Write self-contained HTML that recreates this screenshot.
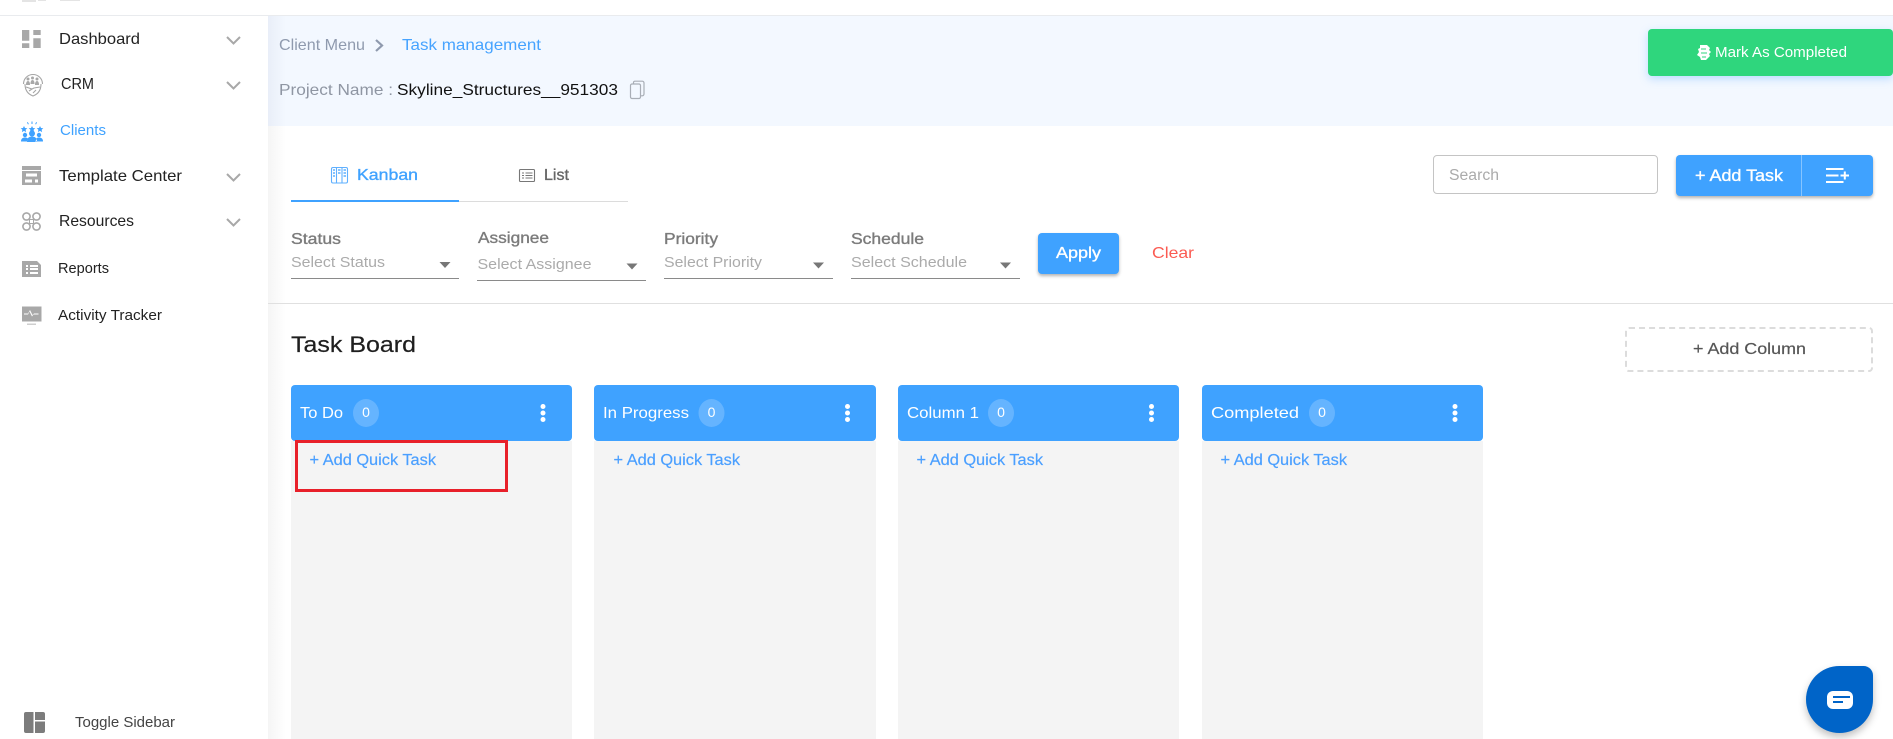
<!DOCTYPE html>
<html lang="en"><head><meta charset="utf-8"><title>Task Board</title>
<style>
html,body{margin:0;padding:0;width:1893px;height:739px;overflow:hidden;background:#fff}
.b{position:absolute;box-sizing:border-box}
svg{position:absolute;left:0;top:0;filter:blur(.3px)}
text{font-family:"Liberation Sans",sans-serif}
.m{stroke-width:.35px;paint-order:stroke}
.s{stroke-width:.2px;paint-order:stroke}
</style></head><body>
<div class="b" style="left:22px;top:0;width:14px;height:2px;background:#e4e4e4"></div>
<div class="b" style="left:38px;top:0;width:8px;height:1px;background:#e4e4e4"></div>
<div class="b" style="left:60px;top:0;width:20px;height:1px;background:#e4e4e4"></div>
<div class="b" style="left:0;top:15px;width:1893px;height:1px;background:#e9ebee"></div>
<div class="b" style="left:268px;top:16px;width:1625px;height:723px;background:linear-gradient(90deg,#f5f5f5,#fff 18px)"></div>
<div class="b" style="left:268px;top:16px;width:1625px;height:110px;background:linear-gradient(90deg,#e9eef8,#f3f8ff 18px)"></div>
<div class="b" style="left:268px;top:303px;width:1625px;height:1px;background:#e0e0e0"></div>
<div class="b" style="left:1648px;top:29px;width:245px;height:47px;background:#2fd67d;border-radius:4px;box-shadow:0 3px 9px rgba(90,170,255,.35)"></div>
<div class="b" style="left:291px;top:200px;width:168px;height:2px;background:#3fa2ff"></div>
<div class="b" style="left:459px;top:201px;width:169px;height:1px;background:#dcdcdc"></div>
<div class="b" style="left:291px;top:278px;width:168px;height:1px;background:#8a8a8a"></div>
<div class="b" style="left:477px;top:280px;width:169px;height:1px;background:#8a8a8a"></div>
<div class="b" style="left:664px;top:278px;width:169px;height:1px;background:#8a8a8a"></div>
<div class="b" style="left:851px;top:278px;width:169px;height:1px;background:#8a8a8a"></div>
<div class="b" style="left:1038px;top:233px;width:81px;height:41px;background:#3fa2ff;border-radius:4px;box-shadow:0 2px 3px rgba(0,0,0,.3)"></div>
<div class="b" style="left:1433px;top:155px;width:225px;height:39px;background:#fff;border:1px solid #c4c4c4;border-radius:4px"></div>
<div class="b" style="left:1676px;top:155px;width:197px;height:41px;background:#3fa2ff;border-radius:4px;box-shadow:0 2px 3px rgba(0,0,0,.3)"></div>
<div class="b" style="left:1801px;top:155px;width:1px;height:41px;background:#86c4ff"></div>
<div class="b" style="left:1625px;top:327px;width:248px;height:45px;border:2px dashed #dcdcdc;border-radius:4px"></div>

<div class="b" style="left:291px;top:441px;width:281px;height:298px;background:#f4f4f4"></div>
<div class="b" style="left:594px;top:441px;width:282px;height:298px;background:#f4f4f4"></div>
<div class="b" style="left:898px;top:441px;width:281px;height:298px;background:#f4f4f4"></div>
<div class="b" style="left:1202px;top:441px;width:281px;height:298px;background:#f4f4f4"></div>
<div class="b" style="left:291px;top:385px;width:281px;height:56px;background:#3fa2ff;border-radius:4px"></div>
<div class="b" style="left:594px;top:385px;width:282px;height:56px;background:#3fa2ff;border-radius:4px"></div>
<div class="b" style="left:898px;top:385px;width:281px;height:56px;background:#3fa2ff;border-radius:4px"></div>
<div class="b" style="left:1202px;top:385px;width:281px;height:56px;background:#3fa2ff;border-radius:4px"></div>
<div class="b" style="left:295px;top:440px;width:213px;height:52px;border:3px solid #e8202a"></div>
<div class="b" style="left:1806px;top:666px;width:67px;height:67px;background:#0064c8;border-radius:50% 14% 50% 50%;box-shadow:0 4px 8px rgba(0,0,0,.25)"></div>
<div class="b" style="left:1827px;top:691px;width:26px;height:18px;background:#fff;border-radius:6px"></div>
<div class="b" style="left:1833px;top:696px;width:17px;height:2px;background:#0064c8"></div>
<div class="b" style="left:1833px;top:701px;width:10px;height:2px;background:#0064c8"></div>

<svg width="1893" height="739" viewBox="0 0 1893 739" xmlns="http://www.w3.org/2000/svg">
<!-- sidebar text -->
<g font-size="16" fill="#222">
<text x="59" y="44" textLength="81" lengthAdjust="spacingAndGlyphs">Dashboard</text>
<text x="61" y="89" textLength="33" lengthAdjust="spacingAndGlyphs">CRM</text>
<text x="60" y="135" font-size="15" fill="#3fa2ff" textLength="46" lengthAdjust="spacingAndGlyphs">Clients</text>
<text x="59" y="181" textLength="123" lengthAdjust="spacingAndGlyphs">Template Center</text>
<text x="59" y="226" textLength="75" lengthAdjust="spacingAndGlyphs">Resources</text>
<text x="58" y="273" font-size="14.5" textLength="51" lengthAdjust="spacingAndGlyphs">Reports</text>
<text x="58" y="320" font-size="14.5" textLength="104" lengthAdjust="spacingAndGlyphs">Activity Tracker</text>
<text x="75" y="727" font-size="14.5" fill="#444" textLength="100" lengthAdjust="spacingAndGlyphs">Toggle Sidebar</text>
</g>
<!-- chevrons -->
<g fill="none" stroke="#a8a8a8" stroke-width="2">
<path d="M227 37l6.500 6.500 6.500-6.500M227 82l6.500 6.500 6.500-6.500M227 174l6.500 6.500 6.500-6.500M227 219l6.500 6.500 6.500-6.500"/>
</g>
<!-- sidebar icons -->
<g fill="#a8a8a8">
<path d="M22 30h7.300v10.700H22zM22 43.300h7.300V48H22zM33.300 30h7.400v5h-7.400zM33.300 38.300h7.400V48h-7.400z"/>
<g fill="none" stroke="#a6a6a6" stroke-width="1.100"><path d="M23.500 84a9.500 9.500 0 0 1 19 0"/><path d="M25 84c0 7 4 10.500 8 12 4-1.500 8-5 8-12"/><path d="M26 87l6 2 2-1 6-1M29 91l3-2M33 93l3-3"/></g>
<circle cx="28" cy="79" r="1.500"/><circle cx="32.500" cy="78" r="1.500"/><circle cx="37" cy="79" r="1.500"/>
<path d="M26 85q0-4 2-4t2 4zM30.500 84q0-4 2-4t2 4zM35 85q0-4 2-4t2 4z"/>
<path d="M22 166h19v4H22z"/><path fill-rule="evenodd" d="M22 171h19v14H22zM26 173.500v3h11v-3zM25 179.500v3h7v-3zM35 179.500v3h3v-3z"/>
<g fill="none" stroke="#a8a8a8" stroke-width="1.600"><circle cx="26.500" cy="216.500" r="3.600"/><circle cx="36.500" cy="216.500" r="3.600"/><circle cx="26.500" cy="226.500" r="3.600"/><circle cx="36.500" cy="226.500" r="3.600"/><rect x="29.500" y="219.500" width="4" height="4" stroke-width="1"/></g>
<path fill-rule="evenodd" d="M22 261h15l4 4v12H22zM26 265v2h2v-2zM30 265v2h8v-2zM26 268v2h2v-2zM30 268v2h8v-2zM26 272v2h2v-2zM30 272v2h8v-2z"/>
<path fill-rule="evenodd" d="M22 306.500h19.500v15H22zM24 314.500h4l1.500-3 2.500 5 1.500-2h5v-1h-4.500l-1.500 1.500-2.500-5-2 3.500h-4z"/><path d="M27 323.500h9v1.500h-9z" fill="#cfcfcf"/>
<path fill="#7c7c7c" d="M26 712h7.500v21H26a2 2 0 0 1-2-2v-17a2 2 0 0 1 2-2zM35 712h8a2 2 0 0 1 2 2v6h-10zM35 721.500h10v9.500a2 2 0 0 1-2 2h-8z"/>
</g>
<g fill="#3fa2ff">
<path d="M24 126l1 2 2.300.3-1.700 1.500.5 2.300-2.100-1.200-2.100 1.200.5-2.300-1.700-1.500 2.300-.3zM32 126l1 2 2.300.3-1.700 1.500.5 2.300-2.100-1.200-2.100 1.200.5-2.300-1.700-1.500 2.300-.3zM40 126l1 2 2.300.3-1.700 1.500.5 2.300-2.100-1.200-2.100 1.200.5-2.300-1.700-1.500 2.300-.3z"/>
<circle cx="25" cy="135" r="2.200"/><circle cx="32" cy="133.500" r="3"/><circle cx="39" cy="135" r="2.200"/>
<path d="M21 141.500q0-4 4-4 2 0 3 1-1 1-1 3zM43 141.500q0-4-4-4-2 0-3 1 1 1-1 3zM27 142q0-5.500 5-5.500t5 5.500z"/>
<path d="M31.500 121.500h1v2.500h-1zM27 122.500l.8-.5 1 2-.8.500zM37 122.500l-.8-.5-1 2 .8.500z"/>
</g>
<!-- breadcrumb -->
<g font-size="16">
<text x="279" y="50" fill="#8f9aae" textLength="86" lengthAdjust="spacingAndGlyphs">Client Menu</text>
<text x="402" y="50" fill="#46a3ff" textLength="139" lengthAdjust="spacingAndGlyphs">Task management</text>
<text x="279" y="95" fill="#8f96a3" textLength="114" lengthAdjust="spacingAndGlyphs">Project Name :</text>
<text x="397" y="95" fill="#111" textLength="221" lengthAdjust="spacingAndGlyphs">Skyline_Structures__951303</text>
</g>
<path d="M376 40l6 5.500-6 5.500" fill="none" stroke="#8f9aae" stroke-width="2.200"/>
<g fill="none" stroke="#a9aeb6" stroke-width="1.200"><rect x="630.500" y="84" width="10" height="14.500" rx="1.500"/><path d="M633.500 84v-1.500a1.300 1.300 0 0 1 1.300-1.300h7.400a1.800 1.800 0 0 1 1.800 1.800v11a1.800 1.800 0 0 1-1.800 1.800h-1.700"/></g>
<!-- tabs -->
<g fill="none" stroke="#5fb0ff" stroke-width="1.100"><rect x="331.500" y="167.500" width="16" height="15.500" rx="1.500"/><path d="M336.500 167.500V183M342 167.500V183"/><path d="M333 170h2M333 173h2M333 176h2M338 170h2.500M338 173h2.500M343.500 170h2.500M343.500 173h2.500M343.500 176h2.500" stroke-width="1.400"/></g>
<text x="357" y="180" font-size="16" fill="#3fa2ff" stroke="#3fa2ff" class="m" textLength="61" lengthAdjust="spacingAndGlyphs">Kanban</text>
<g fill="none" stroke="#777" stroke-width="1.100"><rect x="519.500" y="169.500" width="15" height="12" rx="1"/><path d="M522 173h2M525.500 173h7M522 175.500h2M525.500 175.500h7M522 178h2M525.500 178h7"/></g>
<text x="544" y="180" font-size="16" fill="#666" stroke="#666" class="m" textLength="25" lengthAdjust="spacingAndGlyphs">List</text>
<!-- filters -->
<g font-size="15.500" fill="#7b7b7b" stroke="#7b7b7b">
<text x="291" y="244" textLength="50" lengthAdjust="spacingAndGlyphs" class="m">Status</text>
<text x="478" y="243" textLength="71" lengthAdjust="spacingAndGlyphs" class="m">Assignee</text>
<text x="664" y="244" textLength="54" lengthAdjust="spacingAndGlyphs" class="m">Priority</text>
<text x="851" y="244" textLength="73" lengthAdjust="spacingAndGlyphs" class="m">Schedule</text>
</g>
<g font-size="15" fill="#ababab">
<text x="291" y="267" textLength="94" lengthAdjust="spacingAndGlyphs">Select Status</text>
<text x="477.500" y="269" textLength="114" lengthAdjust="spacingAndGlyphs">Select Assignee</text>
<text x="664" y="267" textLength="98" lengthAdjust="spacingAndGlyphs">Select Priority</text>
<text x="851" y="267" textLength="116" lengthAdjust="spacingAndGlyphs">Select Schedule</text>
</g>
<g fill="#777"><path d="M439.500 262h11l-5.500 6zM626.500 263.500h11l-5.500 6zM813 262.500h11l-5.500 6zM1000 262.500h11l-5.500 6z"/></g>
<text x="1056" y="258" font-size="16" fill="#fff" stroke="#fff" class="m" textLength="45" lengthAdjust="spacingAndGlyphs">Apply</text>
<text x="1152" y="258" font-size="16" fill="#fb5b52" textLength="42" lengthAdjust="spacingAndGlyphs">Clear</text>
<!-- top right -->
<g fill="#fff"><path d="M1700 45h7l3 3-1 2 2 2-2 2 1 2-4 4h-5l-1-3-3-2 2-3-1-3 2-1z"/></g>
<path d="M1701 49h5M1701 53h6M1702 57h4" stroke="#2fd67d" stroke-width="1" fill="none"/>
<text x="1715" y="57" font-size="15" fill="#fff" textLength="132" lengthAdjust="spacingAndGlyphs">Mark As Completed</text>
<text x="1449" y="180" font-size="15.500" fill="#ababab" textLength="50" lengthAdjust="spacingAndGlyphs">Search</text>
<text x="1695" y="181" font-size="16.500" fill="#fff" stroke="#fff" class="m" textLength="88" lengthAdjust="spacingAndGlyphs">+ Add Task</text>
<path d="M1826 169h17.500M1826 175.500h12.500M1826 182h17.500M1840.500 175.500h8.500M1844.800 171.500v8" stroke="#fff" stroke-width="2" fill="none"/>
<!-- board -->
<text x="291" y="352" font-size="22.500" fill="#1e1e1e" stroke="#1e1e1e" class="s" textLength="125" lengthAdjust="spacingAndGlyphs">Task Board</text>
<text x="1693" y="354" font-size="16" fill="#555" stroke="#555" class="s" textLength="113" lengthAdjust="spacingAndGlyphs">+ Add Column</text>
<g fill="#fff" font-size="16">
<text x="300" y="418" textLength="43" lengthAdjust="spacingAndGlyphs">To Do</text>
<text x="603" y="418" textLength="86" lengthAdjust="spacingAndGlyphs">In Progress</text>
<text x="907" y="418" textLength="72" lengthAdjust="spacingAndGlyphs">Column 1</text>
<text x="1211" y="418" textLength="88" lengthAdjust="spacingAndGlyphs">Completed</text>
</g>
<g fill="#fff" fill-opacity=".2">
<ellipse cx="366" cy="413" rx="13" ry="14"/><ellipse cx="711.500" cy="413" rx="13" ry="14"/><ellipse cx="1001" cy="413" rx="13" ry="14"/><ellipse cx="1322" cy="413" rx="13" ry="14"/>
</g>
<g fill="#fff" font-size="14" text-anchor="middle">
<text x="366" y="417">0</text><text x="711.500" y="417">0</text><text x="1001" y="417">0</text><text x="1322" y="417">0</text>
</g>
<g fill="#fff">
<circle cx="543" cy="406.500" r="2.500"/><circle cx="543" cy="413" r="2.500"/><circle cx="543" cy="419.500" r="2.500"/>
<circle cx="847.500" cy="406.500" r="2.500"/><circle cx="847.500" cy="413" r="2.500"/><circle cx="847.500" cy="419.500" r="2.500"/>
<circle cx="1151.500" cy="406.500" r="2.500"/><circle cx="1151.500" cy="413" r="2.500"/><circle cx="1151.500" cy="419.500" r="2.500"/>
<circle cx="1455" cy="406.500" r="2.500"/><circle cx="1455" cy="413" r="2.500"/><circle cx="1455" cy="419.500" r="2.500"/>
</g>
<g fill="#4a9fff" stroke="#4a9fff" font-size="15.500">
<text x="309.500" y="465" class="s" textLength="126.500" lengthAdjust="spacingAndGlyphs">+ Add Quick Task</text>
<text x="613.500" y="465" class="s" textLength="126.500" lengthAdjust="spacingAndGlyphs">+ Add Quick Task</text>
<text x="916.500" y="465" class="s" textLength="126.500" lengthAdjust="spacingAndGlyphs">+ Add Quick Task</text>
<text x="1220.500" y="465" class="s" textLength="126.500" lengthAdjust="spacingAndGlyphs">+ Add Quick Task</text>
</g>
</svg>
</body></html>
